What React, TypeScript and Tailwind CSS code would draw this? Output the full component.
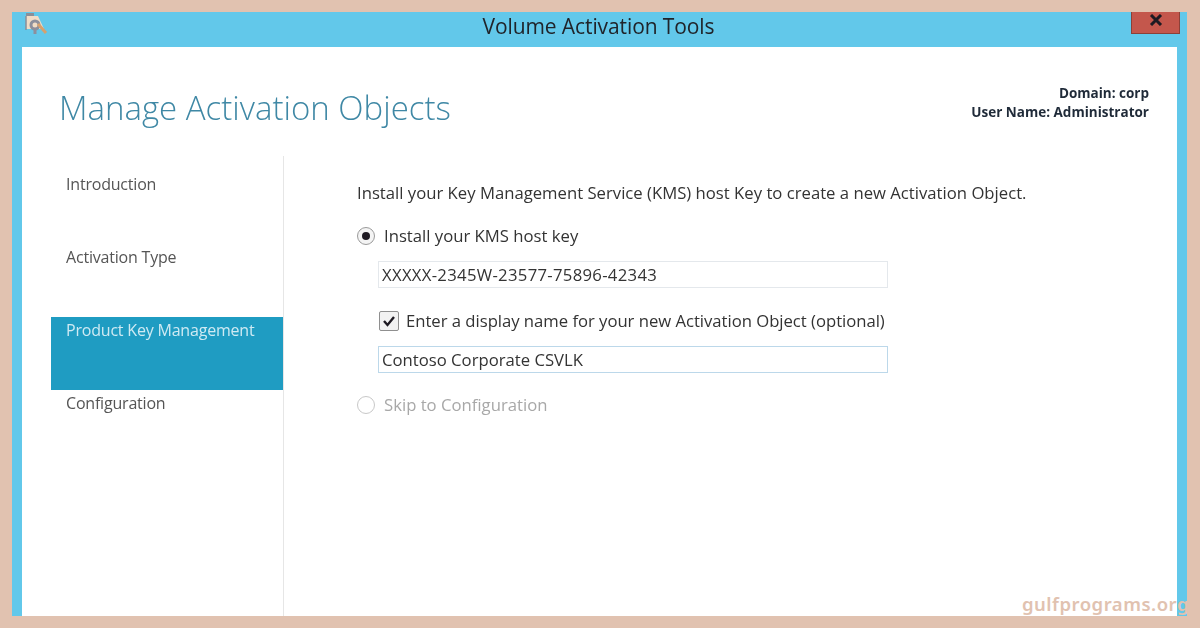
import React from "react";

const font = { fontFamily: '"Open Sans", "Noto Sans", "Liberation Sans", sans-serif' };

function NavItem({ label, active }: { label: string; active?: boolean }) {
  return (
    <div className={`h-[73px] pl-[15px] pt-[3px] text-[16px] leading-[20px] tracking-[-0.2px] ${active ? "bg-[#1f9cc2] text-[#cfeaf3]" : "text-[#555555]"}`}>
      {label}
    </div>
  );
}

export default function App() {
  return (
    <div className="relative w-[1200px] h-[628px] overflow-hidden bg-[#e1c2b0] pt-3 px-3 pb-3" style={font}>
      <div className="w-[1175px] h-[604px] bg-[#62c8ea] flex flex-col blur-[0.5px]">
        <div className="relative h-[35px] shrink-0 flex items-center justify-center">
          <svg className="absolute left-[11px] top-[0px]" width="26" height="24" viewBox="0 0 26 24">
            <rect x="3" y="1" width="8" height="3" fill="#8a8f98" />
            <path d="M3 4h12l6 13H3z" fill="#f1dcc6" />
            <path d="M3 4v14" stroke="#8a8f98" strokeWidth="1.5" />
            <circle cx="12" cy="13" r="4" fill="none" stroke="#8d8f9c" strokeWidth="3" />
            <path d="M12 17v5" stroke="#8d8f9c" strokeWidth="3" />
            <path d="M15 12l8 9" stroke="#d7a06c" strokeWidth="3" />
          </svg>
          <span className="text-[21px] leading-[26px] text-[#20242a] -mt-[8px] -ml-[2px] tracking-[-0.1px]">Volume Activation Tools</span>
          <div className="absolute right-[7px] top-0 w-[49px] h-[22px] bg-[#c4574c] border border-t-0 border-[#8c4038] flex items-center justify-center pb-[6px]">
            <svg width="14" height="12" viewBox="0 0 14 12">
              <path d="M2 1l10 10M12 1L2 11" stroke="#1d1a22" strokeWidth="3" />
            </svg>
          </div>
        </div>
        <div className="flex-1 mx-[10px] bg-white flex flex-col min-h-0">
          <div className="h-[109px] shrink-0 flex justify-between pl-[37px] pr-[28px]">
            <h1 className="text-[33px] leading-[44px] mt-[39px] font-light text-[#3f88a5]">Manage Activation Objects</h1>
            <div className="pt-[37px] text-right text-[13.5px] leading-[19px] font-bold text-[#1f2a38]">
              <div>Domain: corp</div>
              <div>User Name: Administrator</div>
            </div>
          </div>
          <div className="flex-1 flex min-h-0">
            <div className="w-[262px] shrink-0 pl-[29px] border-r border-[#e6e6e6] pt-[15px]">
              <NavItem label="Introduction" />
              <NavItem label="Activation Type" />
              <NavItem label="Product Key Management" active />
              <NavItem label="Configuration" />
            </div>
            <div className="flex-1 pl-[73px] pt-[25px] text-[16.7px] leading-[24px] text-[#333333]">
              <div>Install your Key Management Service (KMS) host Key to create a new Activation Object.</div>
              <div className="flex items-center gap-[9px] mt-[19px]">
                <span className="w-[18px] h-[18px] rounded-full border border-[#9a9a9a] flex items-center justify-center bg-[#f4f4f4]">
                  <span className="w-[8px] h-[8px] rounded-full bg-[#1e1a22]" />
                </span>
                <span>Install your KMS host key</span>
              </div>
              <div className="ml-[21px] mt-[13px] w-[510px] h-[27px] border border-[#e4e8ec] pl-[3px] flex items-center tracking-[0.3px]">XXXXX-2345W-23577-75896-42343</div>
              <div className="ml-[22px] mt-[21px] flex items-center gap-[7px]">
                <span className="w-[20px] h-[20px] rounded-[2px] border border-[#8f8f8f] bg-[#f2f2f2] flex items-center justify-center">
                  <svg width="14" height="12" viewBox="0 0 14 12"><path d="M2 6l3.5 4L12 2" fill="none" stroke="#1e1a22" strokeWidth="2.4" /></svg>
                </span>
                <span className="tracking-[-0.03px]">Enter a display name for your new Activation Object (optional)</span>
              </div>
              <div className="ml-[21px] mt-[13px] w-[510px] h-[27px] border border-[#bcd8ea] pl-[3px] flex items-center">Contoso Corporate CSVLK</div>
              <div className="flex items-center gap-[9px] mt-[20px] text-[#a8a8a8]">
                <span className="w-[18px] h-[18px] rounded-full border border-[#c8c8c8] bg-white" />
                <span>Skip to Configuration</span>
              </div>
            </div>
          </div>
        </div>
      </div>
      <div className="absolute right-[11px] bottom-[12px] h-[24px] text-[18.5px] leading-[24px] font-semibold text-[#e1c2b0] tracking-[0.5px]" style={{ fontFamily: '"Noto Sans", sans-serif' }}>gulfprograms.org</div>
    </div>
  );
}
